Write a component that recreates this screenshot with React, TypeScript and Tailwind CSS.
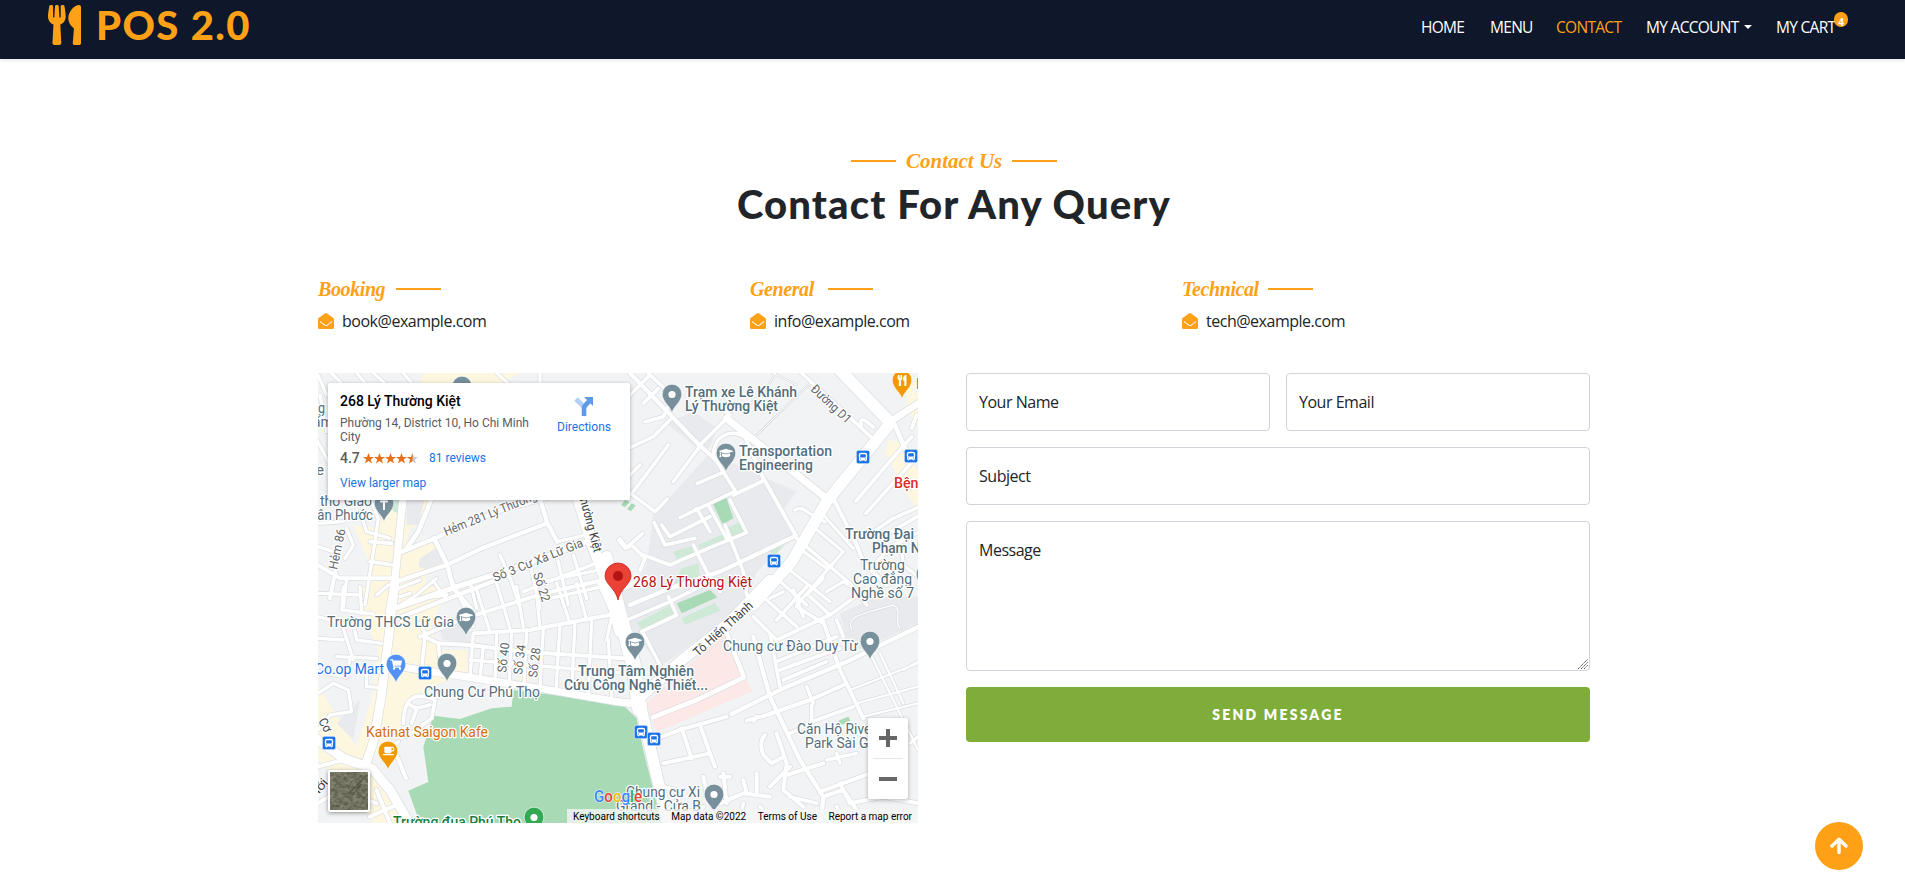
import React from "react";
import { FaUtensils, FaEnvelopeOpen, FaGraduationCap, FaShoppingCart, FaCoffee, FaBus } from "react-icons/fa";

type Road = [number, string];
type Tile = { t: string; areas: [string, string][]; roads: Road[] };

const GREY = "#e8eaed";
const YELLOW = "#fef7e0";
const PARK = "#a8dab5";
const LAWN = "#ceead6";
const PINK = "#fce8e6";

const tiles: Tile[] = [
  {
    t: "translate(-8 -8) scale(0.33333)",
    areas: [
      [YELLOW, "M340,20 L640,20 560,60 330,60z"],
      [YELLOW, "M130,480 L205,490 228,400 355,400 345,475 300,490 285,550 350,520 395,560 410,600 350,625 345,660 385,730 150,730 180,600z"],
      [GREY, "M330,580 L385,545 405,590 345,612 325,605z M290,400 h55 l-20,80 h-35z"],
      [LAWN, "M240,400 L270,400 270,447 248,438z"],
    ],
    roads: [
      [22, "M280,390 L255,640 L238,740"],
      [14, "M365,400 L325,500 L290,550"],
      [13, "M265,565 L375,520 L560,440 L760,385"],
      [13, "M245,655 L410,600 L520,548 L712,475"],
      [14, "M372,520 L412,600 L430,670 L490,740"],
      [16, "M240,735 L420,672 L640,600 L860,520"],
      [13, "M690,400 L712,475 L742,530"],
      [10, "M742,530 L830,510"],
      [34, "M795,370 L848,540 L900,680 L930,800"],
      [10, "M180,400 L205,460 L190,560 L165,720"],
      [12, "M80,600 L60,700 M24,600 L90,640 L170,640 L250,640"],
      [10, "M24,545 L70,560 M110,490 L130,540 L105,580"],
      [10, "M150,440 L170,500 L240,520 M24,475 L100,470"],
      [10, "M24,685 L150,690 M110,640 L100,730"],
      [11, "M180,590 L250,600 M180,530 L245,535"],
      [10, "M570,570 L605,650 L630,730 M480,650 L500,730"],
      [10, "M660,595 L690,730 M740,570 L775,720 M640,680 L870,590"],
      [10, "M700,650 L890,610 M790,570 L830,700 M720,700 L900,660"],
      [10, "M925,525 L945,550 L960,545 M200,690 L235,660"],
      [10, "M24,30 L50,90 M60,20 L110,70 M140,24 L170,60 M190,24 L230,60 M280,24 L310,60 M560,24 L600,60 M690,20 L690,60"],
      [10, "M30,90 L50,200 M24,230 L60,300"],
      [10, "M330,700 L410,690 M275,720 L320,690 L380,640"],
    ],
  },
  {
    t: "translate(292 -8) scale(0.33333)",
    areas: [
      [GREY, "M250,140 L322,190 298,250 255,245 170,175z"],
      [GREY, "M300,265 L470,340 560,380 515,440 560,510 440,620 400,740 30,740 110,600 130,450 240,330z"],
      [PARK, "M308,415 L348,395 370,460 338,478z"],
      [PARK, "M200,690 L300,658 325,695 310,730 205,730z"],
      [LAWN, "M340,492 L390,472 405,500 350,525z M265,540 L345,505 355,520 270,555z M190,560 L250,542 258,570 200,582z M215,610 L265,595 270,640 210,690 175,690z M480,555 L530,525 500,567 482,572z"],
      [PARK, "M45,405 l14,6 -14,16 -12,-6z M65,415 l12,6 -14,18 -12,-6z"],
      [YELLOW, "M835,225 L870,232 930,330 930,450 860,330 825,260z M890,60 L930,50 930,180 890,140z"],
    ],
    roads: [
      [36, "M685,10 L838,170"],
      [34, "M838,178 L650,410 L545,590 L430,720"],
      [20, "M840,170 L930,112"],
      [14, "M855,180 L890,262 L930,275"],
      [22, "M350,160 L655,405"],
      [11, "M570,20 L785,218 M755,180 q-8,-20 10,-14 l25,20"],
      [13, "M60,24 L270,242 L318,285"],
      [11, "M110,20 L190,95 L160,155 L105,170 M60,90 L120,30 M100,115 L145,70"],
      [11, "M60,248 L130,215 L180,165 M265,250 L190,350 M265,245 L350,160"],
      [3, "M435,215 L600,55 M395,140 L470,70 L500,20 M480,20 L560,60"],
      [11, "M360,150 L330,125"],
      [11, "M412,222 C370,185 305,210 312,275 L380,385"],
      [12, "M405,215 L460,340 L558,512"],
      [11, "M262,355 L340,322 M370,390 L460,347"],
      [11, "M210,458 L368,382 M155,480 L180,515 L300,455 M260,430 L300,500"],
      [11, "M360,405 L410,503 L300,548 L180,600 L95,568 M295,420 L350,520"],
      [11, "M345,480 L400,620 L410,690 M250,540 L290,620 L330,680"],
      [13, "M558,512 L330,620 L180,670 L60,720"],
      [12, "M670,400 L740,540 L765,600 L830,660"],
      [11, "M0,345 L75,395 L135,440 L172,402 M70,380 L175,240 M20,370 L90,300"],
      [11, "M30,522 L50,548 L98,505 M70,545 L105,580 L90,615 M132,472 L165,540 L255,520"],
      [11, "M560,520 L720,655 L770,720"],
      [10, "M615,490 L700,560 L560,720 M640,450 L730,550 M520,600 L660,710 M560,545 L650,610 M500,640 L590,720 M590,690 L640,640 M480,700 L520,680"],
      [10, "M555,435 q20,-12 40,8 l50,28"],
      [11, "M738,408 L830,300 L905,215 M768,445 L930,265 M790,500 L850,460 L930,425 M810,520 L930,450 M920,150 L905,190"],
      [10, "M800,590 L850,540 L930,500 M870,520 L880,600 L930,640 M650,680 L700,650 L760,690"],
      [16, "M0,685 L60,660 L110,640"],
    ],
  },
  {
    t: "translate(-8 217) scale(0.33333)",
    areas: [
      [YELLOW, "M150,-10 L420,-10 360,110 385,180 470,180 475,250 380,285 290,330 280,400 190,505 130,490 185,330 205,180 150,60z"],
      [YELLOW, "M20,280 L150,490 310,705 200,705 20,500z"],
      [YELLOW, "M630,240 h28 v35 h-28z"],
      [GREY, "M385,110 L478,95 480,158 400,150z M150,330 L80,400 L130,450z"],
      [PARK, "M370,377 L450,387 545,355 605,350 610,300 760,318 925,348 945,350 980,385 1000,480 1040,640 1060,705 332,705 295,602 355,576 340,470z"],
    ],
    roads: [
      [26, "M256,-30 L235,150 L212,330 L192,450 L165,530"],
      [22, "M230,222 L330,240 L480,262 L700,297 L920,335 L1000,345"],
      [36, "M880,-20 L930,90 L965,220 L985,360"],
      [12, "M492,130 L660,120 L830,88 L925,70"],
      [12, "M385,160 L480,165 L640,185 L940,205"],
      [10, "M480,210 L950,250 M490,130 L480,262"],
      [10, "M520,170 L510,262 M560,130 L555,270 M605,125 L598,275 M650,120 L642,285 M700,115 L690,290 M750,105 L738,300 M795,95 L785,300 M845,90 L835,315 M895,150 L905,320 M905,80 L890,150"],
      [13, "M250,90 L390,35 L560,-30"],
      [12, "M330,140 L450,90 L700,10 L880,-30"],
      [10, "M375,-20 L410,30 M430,-20 L490,110 M500,0 L540,125 M560,-20 L600,115 M620,-10 L640,110 M680,10 L690,115 M740,-20 L780,100 M800,-20 L830,90"],
      [11, "M345,140 L335,235 M345,140 L385,160 L390,210 M330,100 L350,140"],
      [10, "M100,-10 L95,60 L190,72 M150,-10 L155,70 M24,80 L95,100 L130,210 M80,200 L200,205 M24,145 L100,150 M130,100 L140,150 L215,160 M24,245 L110,262 L120,205"],
      [10, "M24,310 L70,280 L115,300 L125,365 L60,375 L24,420 M170,290 L205,292 M170,240 L170,290 M140,240 L215,245"],
      [10, "M265,-5 L330,-30 M270,20 L300,10"],
      [11, "M375,330 C310,300 280,330 280,400 M375,330 L365,385 L290,440 M300,345 L320,355 L360,345 M320,355 L305,400"],
      [12, "M250,470 L288,565 M265,455 L240,480"],
      [28, "M10,440 L100,505 L185,535 L240,600 L310,720"],
      [12, "M24,530 L100,510 M24,640 L90,600 L200,640 M180,680 L270,640 M200,600 L240,700"],
    ],
  },
  {
    t: "translate(292 217) scale(0.33333)",
    areas: [
      [GREY, "M30,-20 L430,-20 340,95 150,230 70,120 30,50z"],
      [GREY, "M690,70 L800,20 930,20 930,100 720,190z"],
      [PARK, "M200,40 L300,0 322,22 215,70z M685,392 l30,-12 6,12 -28,14z"],
      [LAWN, "M80,100 L190,40 200,75 100,122z M215,85 L315,38 330,62 225,105z"],
      [PINK, "M345,130 L405,265 428,303 140,427 110,340z"],
    ],
    roads: [
      [34, "M-10,-100 L30,60 L75,220 L90,340 L150,600 L180,720"],
      [32, "M480,-30 L350,105 L210,215 L75,335"],
      [14, "M348,125 L402,262 L260,330 L128,382"],
      [11, "M40,95 L180,35 L290,-20 M95,125 L200,75 L175,20 M100,130 L150,225"],
      [12, "M155,440 L215,418 L350,380 M215,415 L245,505 M160,520 L300,490 L315,530 M270,405 L300,490"],
      [13, "M365,372 L520,295 L700,220 L930,108"],
      [13, "M430,140 L480,320 L570,510 L640,620 L630,720"],
      [12, "M640,95 L690,240 L760,385 M410,392 L470,375 L600,330 L700,285"],
      [11, "M500,150 L660,75 L750,10 M480,130 L510,290 M510,240 L690,175 M500,215 L680,140 M520,270 L650,215 M640,100 L560,50"],
      [11, "M430,80 L500,150 M470,30 L560,110 M550,0 L580,80 M590,-10 L500,90 M660,75 L600,20 M680,90 L700,140"],
      [7, "M780,190 L850,330 L924,480 M810,190 L880,340 M720,300 L924,220 M740,340 L924,290 M760,380 L924,340 M880,240 L924,215"],
      [11, "M605,345 L605,395 L730,350 M590,290 L610,340 M540,430 L610,395"],
      [12, "M465,435 q-20,20 -5,60 L485,520 L520,500 M500,430 L530,520 L520,600 L580,650 M430,392 L440,380"],
      [12, "M530,555 L640,520 M630,605 L780,550 M640,620 L700,600 L780,720 M690,580 L720,640 L820,620 L924,640"],
      [12, "M160,590 L200,600 L210,650 M280,560 L290,610 M330,560 L360,560 M340,550 L350,640 M330,640 L400,610 L480,620 M400,570 L410,610 M440,550 L440,610 M480,590 L540,530"],
      [11, "M160,690 L280,650 M380,720 L400,640 M450,650 L500,720 M540,620 L620,640 M680,650 L720,720"],
      [10, "M650,510 L740,490 M680,490 L690,520 M740,430 L780,440 M900,460 L924,440"],
      [4, "M725,120 C710,80 740,75 850,45 C880,60 850,90 870,115"],
    ],
  },
];

type LabelProps = { x: number; y: number; w: number; c?: string; s?: number; r?: number; f?: number; children: string };
const Label = ({ x, y, w, c = "#546e7a", s = 14, r = 0, f = 400, children }: LabelProps) => (
  <text
    x={x}
    y={y}
    textLength={w}
    lengthAdjust="spacingAndGlyphs"
    fontSize={s}
    fontWeight={f}
    fill={c}
    stroke="#fff"
    strokeWidth="2.5"
    strokeLinejoin="round"
    paintOrder="stroke"
    transform={r ? `rotate(${r} ${x} ${y})` : undefined}
  >
    {children}
  </text>
);

/* Pin whose tip is at x,y */
const Pin = ({ x, y, c = "#78909c", children }: { x: number; y: number; c?: string; children?: React.ReactNode }) => (
  <g transform={`translate(${x} ${y})`}>
    <path d="M0 0C-1.5 -7 -9.8 -11 -9.8 -19A9.8 9.8 0 0 1 9.8 -19C9.8 -11 1.5 -7 0 0Z" fill={c} stroke="#fff" strokeWidth="0.6" />
    {children ?? <circle cy="-18.5" r="3.6" fill="#fff" />}
  </g>
);

const Bus = ({ x, y }: { x: number; y: number }) => (
  <g transform={`translate(${x} ${y})`}>
    <rect x="-6.7" y="-6.7" width="13.4" height="13.4" rx="2" fill="#1a73e8" stroke="#fff" strokeWidth="0.6" />
    <FaBus x={-4.5} y={-4.5} size={9} color="#fff" />
  </g>
);

const MapArt = () => (
  <svg width="600" height="450" viewBox="0 0 600 450" fontFamily="Roboto, sans-serif" className="block">
    <rect width="600" height="450" fill="#f1f3f4" />
    {tiles.map((q) => (
      <g key={q.t} transform={q.t}>
        {q.areas.map(([c, d]) => <path key={d} d={d} fill={c} />)}
      </g>
    ))}
    {tiles.map((q) => (
      <g key={q.t} transform={q.t} fill="none" stroke="#dadce0" strokeLinecap="round" strokeLinejoin="round">
        {q.roads.map(([w, d]) => <path key={d} d={d} strokeWidth={w + 4} />)}
      </g>
    ))}
    {tiles.map((q) => (
      <g key={q.t} transform={q.t} fill="none" stroke="#fff" strokeLinecap="round" strokeLinejoin="round">
        {q.roads.map(([w, d]) => <path key={d} d={d} strokeWidth={w} />)}
      </g>
    ))}

    <Label x={-7} y={40} w={14}>ng</Label>
    <Label x={-13} y={54} w={28}>hẩm</Label>
    <Label x={-2} y={102} w={24}>e lô</Label>
    <Label x={2} y={133} w={52}>thờ Giáo</Label>
    <Label x={-8} y={147} w={63}>uân Phước</Label>
    <Label x={19} y={197} w={41} s={12.5} c="#5f6368" r={-78}>Hẻm 86</Label>
    <Label x={128} y={163} w={99} s={12.5} c="#5f6368" r={-22}>Hẻm 281 Lý Thường</Label>
    <Label x={177} y={209} w={96} s={12.5} c="#5f6368" r={-22}>Số 3 Cư Xá Lữ Gia</Label>
    <Label x={215} y={201} w={30} s={12.5} c="#5f6368" r={72}>Số 22</Label>
    <Label x={260} y={120} w={62} s={12.5} c="#3c4043" r={75}>Thường Kiệt</Label>
    <Label x={492} y={17} w={50} s={12.5} c="#5f6368" r={43}>Đường D1</Label>
    <Label x={380} y={284} w={75} s={12.5} c="#3c4043" r={-42}>Tô Hiến Thành</Label>
    <Label x={188} y={300} w={30} s={12.5} c="#5f6368" r={-83}>Số 40</Label>
    <Label x={204} y={302} w={30} s={12.5} c="#5f6368" r={-83}>Số 34</Label>
    <Label x={219} y={305} w={30} s={12.5} c="#5f6368" r={-83}>Số 28</Label>
    <Label x={0} y={348} w={14} s={12.5} c="#3c4043" r={60}>Cơ</Label>
    <Label x={-2} y={425} w={20} s={12.5} c="#3c4043" r={-50}>hới</Label>

    <Label x={367} y={24} w={112} f={500}>Trạm xe Lê Khánh</Label>
    <Label x={367} y={38} w={93} f={500}>Lý Thường Kiệt</Label>
    <Label x={421} y={83} w={93} f={500}>Transportation</Label>
    <Label x={421} y={97} w={74} f={500}>Engineering</Label>
    <Label x={527} y={166} w={69} f={500}>Trường Đại</Label>
    <Label x={554} y={180} w={64} f={500}>Phạm Ngọ</Label>
    <Label x={542} y={197} w={45}>Trường</Label>
    <Label x={535} y={211} w={59}>Cao đẳng</Label>
    <Label x={533} y={225} w={63}>Nghề số 7</Label>
    <Label x={576} y={115} w={43} c="#d93025" f={500}>Bệnh v</Label>
    <Label x={598} y={16} w={22} c="#d56e0c">Lẩu</Label>
    <Label x={9} y={254} w={127}>Trường THCS Lữ Gia</Label>
    <Label x={-3} y={301} w={69} c="#1a73e8">Co.op Mart</Label>
    <Label x={106} y={324} w={116}>Chung Cư Phú Thọ</Label>
    <Label x={48} y={364} w={122} c="#d56e0c">Katinat Saigon Kafe</Label>
    <Label x={260} y={303} w={116} f={500}>Trung Tâm Nghiên</Label>
    <Label x={246} y={317} w={144} f={500}>Cứu Công Nghệ Thiết...</Label>
    <Label x={405} y={278} w={135}>Chung cư Đào Duy Từ</Label>
    <Label x={479} y={361} w={79}>Căn Hộ River</Label>
    <Label x={487} y={375} w={79}>Park Sài Gòn</Label>
    <Label x={308} y={424} w={74}>Chung cư Xi</Label>
    <Label x={298} y={438} w={85}>Grand - Cửa B</Label>
    <Label x={75} y={454} w={128} c="#188038" f={500}>Trường đua Phú Thọ</Label>
    <Label x={315} y={214} w={119} c="#b31412">268 Lý Thường Kiệt</Label>

    <Pin x={144} y={32} />
    <Pin x={66} y={149}><path d="M0 -24v12M-4 -20.500h8" stroke="#fff" strokeWidth="2" /></Pin>
    <Pin x={354} y={40} />
    <Pin x={408} y={99}><FaGraduationCap x={-7} y={-26} size={14} color="#fff" /></Pin>
    <Pin x={584} y={26} c="#f29900"><FaUtensils x={-5.5} y={-24} size={11} color="#fff" /></Pin>
    <Pin x={148} y={263}><FaGraduationCap x={-7} y={-26} size={14} color="#fff" /></Pin>
    <Pin x={317} y={288}><FaGraduationCap x={-7} y={-26} size={14} color="#fff" /></Pin>
    <Pin x={129} y={309} />
    <Pin x={78} y={310} c="#5491f5"><FaShoppingCart x={-6} y={-24.5} size={12} color="#fff" /></Pin>
    <Pin x={70} y={397} c="#f29900"><FaCoffee x={-5.5} y={-25} size={12} color="#fff" /></Pin>
    <Pin x={552} y={287} />
    <Pin x={396} y={440} />
    <Pin x={216} y={463} c="#34a853" />
    <Pin x={608} y={220} />
    <Bus x={545} y={84} />
    <Bus x={593} y={83} />
    <Bus x={456} y={188} />
    <Bus x={107} y={300} />
    <Bus x={11} y={370} />
    <Bus x={323} y={359} />
    <Bus x={336} y={366} />

    <path d="M300 227C298 216 287 211 287 203A13 13 0 0 1 313 203C313 211 302 216 300 227Z" fill="#ea4335" stroke="#c5221f" strokeWidth="0.8" />
    <circle cx="300" cy="203" r="5" fill="#b31412" />

    <text x="276" y="429" fontSize="17" textLength="48" fontWeight="500" stroke="#fff" strokeWidth="1" paintOrder="stroke" lengthAdjust="spacingAndGlyphs">
      <tspan fill="#4285f4">G</tspan><tspan fill="#ea4335">o</tspan><tspan fill="#fbbc04">o</tspan><tspan fill="#4285f4">g</tspan><tspan fill="#34a853">l</tspan><tspan fill="#ea4335">e</tspan>
    </text>
  </svg>
);

const Star = ({ half }: { half?: boolean }) => {
  const d = "M5.500 0l1.500 4h4l-3.200 2.500 1.200 4-3.500-2.400-3.500 2.400 1.200-4L0 4h4z";
  return (
    <svg width="11" height="11" viewBox="0 0 11 11">
      <path d={d} fill={half ? "#c8c8c8" : "#e7711b"} />
      {half && <path d="M5.500 0v8.100l-3.500 2.400 1.200-4L0 4h4z" fill="#e7711b" />}
    </svg>
  );
};

const MapPanel = () => (
  <div className="relative h-[450px] w-[600px] shrink-0 overflow-hidden font-[Roboto,sans-serif] tracking-normal">
    <MapArt />
    <div className="absolute left-[10px] top-[10px] flex h-[117px] w-[302px] justify-between rounded-[2px] bg-white pl-3 shadow-[0_1px_4px_rgba(0,0,0,0.3)]">
      <div className="w-[200px] pt-[9px]">
        <div className="text-[14px] leading-[18px] font-medium text-black">268 Lý Thường Kiệt</div>
        <div className="mt-[6px] w-[196px] text-[12px] leading-[14px] text-[#5b5b5b]">Phường 14, District 10, Ho Chi Minh City</div>
        <div className="mt-[5px] flex h-[18px] items-center">
          <span className="w-[23px] text-[14px] font-medium text-[#5b5b5b]">4.7</span>
          <span className="flex w-[66px]"><Star /><Star /><Star /><Star /><Star half /></span>
          <a className="text-[12px] text-[#1a73e8]">81 reviews</a>
        </div>
        <a className="mt-[9px] block text-[12px] leading-[14px] text-[#1a73e8]">View larger map</a>
      </div>
      <div className="mr-[18px] flex w-[56px] flex-col items-center pt-[13px]">
        <svg width="20" height="20" viewBox="0 0 20 20">
          <path d="M2 3L9.500 10.500" stroke="#b5d1f7" strokeWidth="5" fill="none" />
          <path d="M10 20V13Q10 10.500 12 8.500L15 5.500" stroke="#5f9ae8" strokeWidth="4.600" fill="none" />
          <path d="M10 1h9v9z" fill="#5f9ae8" />
        </svg>
        <span className="mt-[3px] text-[12px] leading-[16px] text-[#1a73e8]">Directions</span>
      </div>
    </div>
    <div className="absolute left-[10px] top-[397px] h-[42px] w-[42px] rounded-[2px] bg-white p-[2px] shadow-[0_1px_4px_rgba(0,0,0,0.4)]">
      <svg width="38" height="38" viewBox="0 0 38 38">
        <filter id="grain" x="0" y="0" width="100%" height="100%" colorInterpolationFilters="sRGB">
          <feTurbulence type="fractalNoise" baseFrequency="0.22 0.3" numOctaves="4" seed="7" />
          <feColorMatrix values="0.35 0 0 0 0.27 0.35 0 0 0 0.27 0.35 0 0 0 0.2 0 0 0 0 1" />
        </filter>
        <rect width="38" height="38" filter="url(#grain)" />
        <path d="M18 22L36 4M22 24L31 12" stroke="#3f4036" strokeWidth="2" opacity="0.4" />
      </svg>
    </div>
    <div className="absolute left-[550px] top-[345px] flex h-[81px] w-[40px] flex-col items-center rounded-[2px] bg-white shadow-[0_1px_4px_rgba(0,0,0,0.3)]">
      <svg width="40" height="81" viewBox="0 0 40 81">
        <path d="M11 20h18M20 11v18M11 61h18" stroke="#666" strokeWidth="4" />
        <path d="M5 40.500h30" stroke="#e6e6e6" />
      </svg>
    </div>
    <div className="absolute bottom-0 left-[249px] flex h-[14px] w-[351px] items-center justify-between bg-[#f5f5f5]/80 px-[6px] text-[10px] whitespace-nowrap text-black">
      <span>Keyboard shortcuts</span>
      <span>Map data ©2022</span>
      <span>Terms of Use</span>
      <span>Report a map error</span>
    </div>
  </div>
);

const Script = ({ children, className = "" }: { children: string; className?: string }) => (
  <span className={`font-['Liberation_Serif',serif] font-bold whitespace-nowrap italic text-[#fea116] ${className}`}>{children}</span>
);

const contacts = [
  { title: "Booking", mail: "book@example.com", w: "w-[68px]" },
  { title: "General", mail: "info@example.com", w: "w-[68px]" },
  { title: "Technical", mail: "tech@example.com", w: "w-[76px]" },
];

export default function App() {
  return (
    <div className="min-h-[893px] w-full overflow-hidden bg-white font-['Open_Sans','Noto_Sans',sans-serif] text-[16px] tracking-[-0.48px] text-[#212529]">
      <header className="flex h-[59px] items-start justify-between bg-[#0f172b] pl-12 shadow-[0_2px_4px_rgba(0,0,0,0.075)]">
        <div className="flex items-center pt-[4px] text-[#fea116]">
          <FaUtensils className="h-[40px] w-[33px]" preserveAspectRatio="none" />
          <span className="ml-[15px] font-[Lato,sans-serif] text-[40px] leading-[42px] font-black tracking-[1.4px]">POS 2.0</span>
        </div>
        <nav className="flex pt-[16px] text-[15.5px] leading-[22px] tracking-[-0.7px] whitespace-nowrap text-white">
          <a className="w-[69px]">HOME</a>
          <a className="w-[66px]">MENU</a>
          <a className="w-[90px] text-[#fea116]">CONTACT</a>
          <a className="flex w-[130px] items-center">
            MY ACCOUNT
            <span className="ml-[5px] border-x-4 border-t-4 border-x-transparent border-t-white" />
          </a>
          <a className="relative w-[129px]">
            MY CART
            <span className="absolute left-[58px] top-[-4px] flex h-[15px] w-[14px] items-center justify-center rounded-full bg-[#fea116] pt-[4px] text-[10px] leading-none font-bold tracking-normal">4</span>
          </a>
        </nav>
      </header>

      <main className="w-[1590px] pl-[318px]">
        <div className="flex items-center justify-center gap-[10px] pt-[89px]">
          <span className="h-[2px] w-[45px] bg-[#fea116]" />
          <Script className="w-[96px] text-center text-[21px] leading-[26px] tracking-normal">Contact Us</Script>
          <span className="h-[2px] w-[45px] bg-[#fea116]" />
        </div>
        <h1 className="mt-[6px] text-center font-[Lato,sans-serif] text-[40px] leading-[48px] font-black tracking-[1.15px] whitespace-nowrap">Contact For Any Query</h1>

        <div className="mt-[48px] flex">
          {contacts.map((c) => (
            <div key={c.title} className="w-[432px] shrink-0">
              <div className="flex h-[26px] items-center gap-[10px]">
                <Script className={`${c.w} text-[20px] tracking-[-0.4px]`}>{c.title}</Script>
                <span className="h-[2px] w-[45px] bg-[#fea116]" />
              </div>
              <div className="mt-[7px] flex h-[24px] items-center gap-2">
                <FaEnvelopeOpen className="size-4 text-[#fea116]" />
                <span>{c.mail}</span>
              </div>
            </div>
          ))}
        </div>

        <div className="mt-[40px] flex gap-12">
          <MapPanel />
          <form className="flex w-[624px] shrink-0 flex-col gap-4">
            <div className="flex gap-4">
              <div className="flex h-[58px] flex-1 items-center rounded-[4px] border border-[#ced4da] px-3">Your Name</div>
              <div className="flex h-[58px] flex-1 items-center rounded-[4px] border border-[#ced4da] px-3">Your Email</div>
            </div>
            <div className="flex h-[58px] items-center rounded-[4px] border border-[#ced4da] px-3">Subject</div>
            <div className="relative h-[150px] rounded-[4px] border border-[#ced4da] px-3 pt-4">
              Message
              <svg className="absolute right-0 bottom-0" width="13" height="13" viewBox="0 0 13 13">
                <path d="M2 12L12 2M5 12L12 5M8 12L12 8" stroke="#555" strokeDasharray="1.500 0.500" />
              </svg>
            </div>
            <button type="button" className="h-[55px] rounded-[4px] bg-[#7fad39] font-[Lato,sans-serif] text-[14px] font-extrabold tracking-[2.200px] text-white">SEND MESSAGE</button>
          </form>
        </div>
      </main>

      <a className="fixed right-[42px] bottom-[23px] flex size-12 items-center justify-center rounded-full bg-[#fea116]">
        <svg width="18" height="18" viewBox="0 0 18 18" fill="none" stroke="#fff" strokeWidth="3.400" strokeLinecap="round" strokeLinejoin="round">
          <path d="M9 15.500V2.500M2 9L9 2.200L16 9" />
        </svg>
      </a>
    </div>
  );
}
